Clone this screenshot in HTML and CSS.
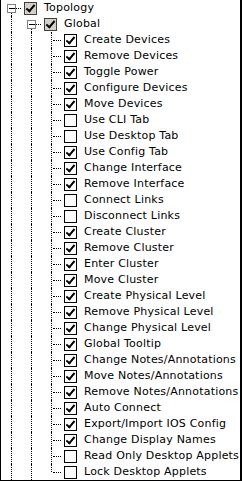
FILE: index.html
```html
<!DOCTYPE html>
<html lang="en">
<head>
    <meta charset="UTF-8">
    <title>Permissions Tree</title>
    <link rel="stylesheet" href="styles.css">
</head>
<body>
    <div class="tree">
        <div class="row"><span class="branch open"><span class="toggle"></span></span><span class="cb on partial"></span><span class="label">Topology</span></div>
        <div class="row"><span class="guide"></span><span class="branch open"><span class="toggle"></span></span><span class="cb on partial"></span><span class="label">Global</span></div>

        <div class="row"><span class="guide"></span><span class="guide"></span><span class="branch"></span><span class="cb on"></span><span class="label">Create Devices</span></div>
        <div class="row"><span class="guide"></span><span class="guide"></span><span class="branch"></span><span class="cb on"></span><span class="label">Remove Devices</span></div>
        <div class="row"><span class="guide"></span><span class="guide"></span><span class="branch"></span><span class="cb on"></span><span class="label">Toggle Power</span></div>
        <div class="row"><span class="guide"></span><span class="guide"></span><span class="branch"></span><span class="cb on"></span><span class="label">Configure Devices</span></div>
        <div class="row"><span class="guide"></span><span class="guide"></span><span class="branch"></span><span class="cb on"></span><span class="label">Move Devices</span></div>
        <div class="row"><span class="guide"></span><span class="guide"></span><span class="branch"></span><span class="cb"></span><span class="label">Use CLI Tab</span></div>
        <div class="row"><span class="guide"></span><span class="guide"></span><span class="branch"></span><span class="cb"></span><span class="label">Use Desktop Tab</span></div>
        <div class="row"><span class="guide"></span><span class="guide"></span><span class="branch"></span><span class="cb on"></span><span class="label">Use Config Tab</span></div>
        <div class="row"><span class="guide"></span><span class="guide"></span><span class="branch"></span><span class="cb on"></span><span class="label">Change Interface</span></div>
        <div class="row"><span class="guide"></span><span class="guide"></span><span class="branch"></span><span class="cb on"></span><span class="label">Remove Interface</span></div>
        <div class="row"><span class="guide"></span><span class="guide"></span><span class="branch"></span><span class="cb"></span><span class="label">Connect Links</span></div>
        <div class="row"><span class="guide"></span><span class="guide"></span><span class="branch"></span><span class="cb"></span><span class="label">Disconnect Links</span></div>
        <div class="row"><span class="guide"></span><span class="guide"></span><span class="branch"></span><span class="cb on"></span><span class="label">Create Cluster</span></div>
        <div class="row"><span class="guide"></span><span class="guide"></span><span class="branch"></span><span class="cb on"></span><span class="label">Remove Cluster</span></div>
        <div class="row"><span class="guide"></span><span class="guide"></span><span class="branch"></span><span class="cb on"></span><span class="label">Enter Cluster</span></div>
        <div class="row"><span class="guide"></span><span class="guide"></span><span class="branch"></span><span class="cb on"></span><span class="label">Move Cluster</span></div>
        <div class="row"><span class="guide"></span><span class="guide"></span><span class="branch"></span><span class="cb on"></span><span class="label">Create Physical Level</span></div>
        <div class="row"><span class="guide"></span><span class="guide"></span><span class="branch"></span><span class="cb on"></span><span class="label">Remove Physical Level</span></div>
        <div class="row"><span class="guide"></span><span class="guide"></span><span class="branch"></span><span class="cb on"></span><span class="label">Change Physical Level</span></div>
        <div class="row"><span class="guide"></span><span class="guide"></span><span class="branch"></span><span class="cb on"></span><span class="label">Global Tooltip</span></div>
        <div class="row"><span class="guide"></span><span class="guide"></span><span class="branch"></span><span class="cb on"></span><span class="label">Change Notes/Annotations</span></div>
        <div class="row"><span class="guide"></span><span class="guide"></span><span class="branch"></span><span class="cb on"></span><span class="label">Move Notes/Annotations</span></div>
        <div class="row"><span class="guide"></span><span class="guide"></span><span class="branch"></span><span class="cb on"></span><span class="label">Remove Notes/Annotations</span></div>
        <div class="row"><span class="guide"></span><span class="guide"></span><span class="branch"></span><span class="cb on"></span><span class="label">Auto Connect</span></div>
        <div class="row"><span class="guide"></span><span class="guide"></span><span class="branch"></span><span class="cb on"></span><span class="label">Export/Import IOS Config</span></div>
        <div class="row"><span class="guide"></span><span class="guide"></span><span class="branch"></span><span class="cb on"></span><span class="label">Change Display Names</span></div>
        <div class="row"><span class="guide"></span><span class="guide"></span><span class="branch"></span><span class="cb"></span><span class="label">Read Only Desktop Applets</span></div>
        <div class="row"><span class="guide"></span><span class="guide"></span><span class="branch last"></span><span class="cb"></span><span class="label">Lock Desktop Applets</span></div>
    </div>
</body>
</html>
```

FILE: styles.css
```css
body {
    margin: 0;
    background: #fff;
    font-family: 'DejaVu Sans', Verdana, sans-serif;
    font-size: 11px;
    color: #000;
}

.tree {
    box-sizing: border-box;
    width: 242px;
    height: 481px;
    overflow: hidden;
    border-left: 1px solid #000;
    border-right: 2px solid #000;
    border-bottom: 1px solid #000;
    background: #fff;
}

.row {
    display: flex;
    height: 16px;
}

/* tree guide lines */
.guide,
.branch {
    flex: none;
    width: 20px;
    height: 16px;
    position: relative;
}

.guide::before,
.branch::before {
    content: "";
    position: absolute;
    left: 10px;
    top: 0;
    height: 16px;
    border-left: 1px dotted #000;
}

.branch::after {
    content: "";
    position: absolute;
    left: 12px;
    top: 8px;
    width: 8px;
    border-top: 1px dotted #000;
}

.branch.last::before {
    height: 8px;
}

.branch.open::before {
    top: 8px;
    height: 8px;
}

.toggle {
    position: absolute;
    left: 6px;
    top: 4px;
    box-sizing: border-box;
    width: 9px;
    height: 9px;
    border: 1px solid #808080;
    background: #fff;
}

.toggle::after {
    content: "";
    position: absolute;
    left: 1px;
    top: 3px;
    width: 5px;
    height: 1px;
    background: #000;
}

/* checkboxes */
.cb {
    flex: none;
    position: relative;
    box-sizing: border-box;
    width: 13px;
    height: 13px;
    margin: 2px 7px 0 3px;
    border: 1px solid #000;
    background: #fff;
}

.cb.partial {
    background: #d4d0c8;
    border-color: #404040;
}

.cb.on::after {
    content: "";
    position: absolute;
    left: 3px;
    top: 0px;
    width: 3px;
    height: 7px;
    border: solid #000;
    border-width: 0 2px 2px 0;
    transform: rotate(40deg);
}

.label {
    line-height: 16px;
    letter-spacing: 0.2px;
    white-space: nowrap;
}
```
